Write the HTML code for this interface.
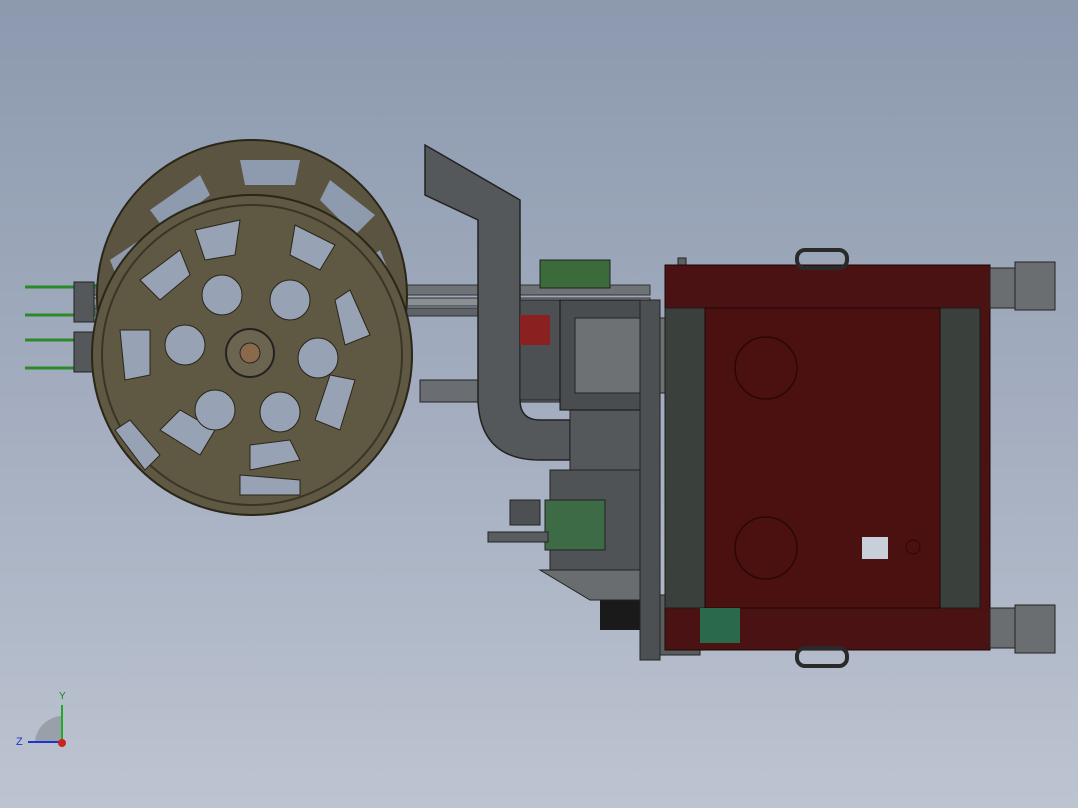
<!DOCTYPE html>
<html><head><style>
html,body{margin:0;padding:0;}
body{width:1078px;height:808px;overflow:hidden;background:linear-gradient(#8c99ae,#a3adbf 50%,#bdc4d1);}
svg{position:absolute;left:0;top:0;}
</style></head><body>
<svg width="1078" height="808" viewBox="0 0 1078 808" xmlns="http://www.w3.org/2000/svg">
<rect x="90" y="285" width="560" height="10" fill="#6e7378" stroke="#333" stroke-width="1"/>
<rect x="90" y="298" width="560" height="8" fill="#8a8f94" stroke="#333" stroke-width="1"/>
<rect x="90" y="308" width="560" height="8" fill="#5e6368" stroke="#333" stroke-width="1"/>
<rect x="420" y="380" width="180" height="22" fill="#6a6e72" stroke="#222"/>
<g stroke="#2a8a2a" stroke-width="3">
<line x1="25" y1="287" x2="200" y2="287"/><line x1="25" y1="315" x2="200" y2="315"/>
<line x1="25" y1="340" x2="200" y2="340"/><line x1="25" y1="368" x2="200" y2="368"/>
</g>
<rect x="74" y="282" width="20" height="40" fill="#55585a" stroke="#222"/>
<rect x="74" y="332" width="20" height="40" fill="#55585a" stroke="#222"/>
<circle cx="252" cy="295" r="155" fill="#5b5440" stroke="#2a2618" stroke-width="2"/>
<g fill="#8e9aae">
<path d="M150 210 L200 175 L210 195 L165 230Z"/><path d="M240 160 L300 160 L295 185 L245 185Z"/>
<path d="M330 180 L375 215 L355 235 L320 200Z"/><path d="M380 250 L400 300 L375 310 L360 265Z"/>
<path d="M110 260 L140 240 L150 265 L120 285Z"/>
</g>
<circle cx="252" cy="355" r="160" fill="#5f5842" stroke="#2a2618" stroke-width="2"/>
<circle cx="252" cy="355" r="150" fill="none" stroke="#3a3526" stroke-width="2"/>
<g fill="#97a2b5" stroke="#2a2618">
<path d="M195 230 L240 220 L235 255 L205 260Z"/><path d="M295 225 L335 245 L320 270 L290 255Z"/>
<path d="M350 290 L370 335 L345 345 L335 300Z"/><path d="M355 380 L340 430 L315 420 L330 375Z"/>
<path d="M300 460 L250 470 L250 445 L290 440Z"/><path d="M200 455 L160 430 L180 410 L215 430Z"/>
<path d="M125 380 L120 330 L150 330 L150 375Z"/><path d="M140 280 L180 250 L190 275 L160 300Z"/>
<path d="M240 475 L300 480 L300 495 L240 495Z"/><path d="M130 420 L160 455 L145 470 L115 430Z"/>
<circle cx="222" cy="295" r="20"/><circle cx="290" cy="300" r="20"/><circle cx="185" cy="345" r="20"/>
<circle cx="318" cy="358" r="20"/><circle cx="215" cy="410" r="20"/><circle cx="280" cy="412" r="20"/>
</g>
<circle cx="250" cy="353" r="24" fill="#6b6550" stroke="#222" stroke-width="2"/>
<circle cx="250" cy="353" r="10" fill="#8a6a4a" stroke="#222"/>
<path d="M425 145 L520 200 L520 400 Q520 420 540 420 L570 420 L570 460 L540 460 Q480 460 478 400 L478 220 L425 195Z" fill="#55585a" stroke="#222" stroke-width="1.5"/>
<rect x="520" y="300" width="45" height="100" fill="#4d5052" stroke="#222"/>
<rect x="570" y="400" width="90" height="70" fill="#55585b" stroke="#222"/>
<rect x="540" y="260" width="70" height="28" fill="#3b6b3b" stroke="#222"/>
<rect x="560" y="300" width="100" height="110" fill="#4a4d50" stroke="#111"/>
<rect x="575" y="318" width="90" height="75" fill="#6d7174" stroke="#222"/>
<rect x="520" y="315" width="30" height="30" fill="#8a2020"/>
<rect x="550" y="470" width="100" height="100" fill="#4f5356" stroke="#222"/>
<rect x="545" y="500" width="60" height="50" fill="#3d6b45" stroke="#222"/>
<rect x="600" y="595" width="40" height="35" fill="#1a1a1a"/>
<rect x="650" y="595" width="50" height="60" fill="#5a5d60" stroke="#222"/>
<path d="M540 570 L650 570 L650 600 L590 600Z" fill="#6a6d70" stroke="#222"/>
<rect x="510" y="500" width="30" height="25" fill="#4d5052" stroke="#222"/>
<rect x="488" y="532" width="60" height="10" fill="#5a5d60" stroke="#222"/>
<rect x="640" y="300" width="20" height="360" fill="#4d5052" stroke="#222"/>
<rect x="678" y="258" width="8" height="225" fill="#5e6164" stroke="#222"/>
<rect x="665" y="265" width="325" height="385" fill="#4a1212" stroke="#1c0606"/>
<rect x="665" y="308" width="40" height="300" fill="#3a413d" stroke="#1c1c1c"/>
<rect x="940" y="308" width="40" height="300" fill="#3a413d" stroke="#1c1c1c"/>
<rect x="705" y="308" width="235" height="300" fill="#4b1110" stroke="#1c0606"/>
<circle cx="766" cy="368" r="31" fill="none" stroke="#2a0808" stroke-width="1.5"/>
<circle cx="766" cy="548" r="31" fill="none" stroke="#2a0808" stroke-width="1.5"/>
<rect x="862" y="537" width="26" height="22" fill="#c8cfdb"/>
<circle cx="913" cy="547" r="7" fill="none" stroke="#2a0808"/>
<rect x="700" y="608" width="40" height="35" fill="#2a6a4a"/>
<rect x="797" y="250" width="50" height="18" rx="8" fill="none" stroke="#2a2a2a" stroke-width="4"/>
<rect x="797" y="648" width="50" height="18" rx="8" fill="none" stroke="#2a2a2a" stroke-width="4"/>
<g fill="#6b6e70" stroke="#222">
<rect x="990" y="268" width="25" height="40"/><rect x="1015" y="262" width="40" height="48"/>
<rect x="990" y="608" width="25" height="40"/><rect x="1015" y="605" width="40" height="48"/>
</g>
<path d="M62 742 L35 742 A28 28 0 0 1 62 716Z" fill="#9aa0aa"/>
<line x1="62" y1="742" x2="62" y2="705" stroke="#22aa22" stroke-width="2"/>
<line x1="62" y1="742" x2="28" y2="742" stroke="#2233cc" stroke-width="2"/>
<circle cx="62" cy="743" r="4" fill="#cc2222"/>
<text x="59" y="699" font-family="Liberation Sans,sans-serif" font-size="10" fill="#1a8a1a">Y</text>
<text x="16" y="745" font-family="Liberation Sans,sans-serif" font-size="11" fill="#2233cc">Z</text>
</svg>
</body></html>
